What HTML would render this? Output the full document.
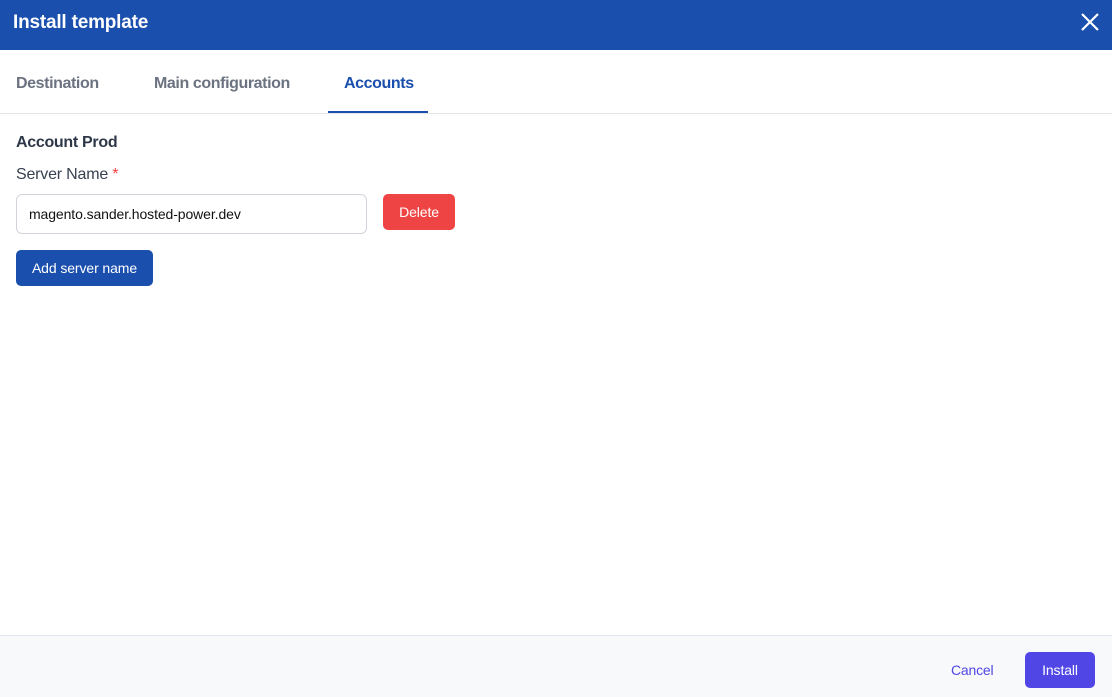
<!DOCTYPE html>
<html><head><meta charset="utf-8"><style>
*{box-sizing:border-box;margin:0;padding:0}
body{width:1112px;height:697px;overflow:hidden;background:#fff;font-family:"Liberation Sans",sans-serif;position:relative}
.hdr{position:absolute;left:0;top:0;width:1112px;height:50px;background:#1a4fad;color:#fff}
.hdr h1{position:absolute;left:13px;top:12px;font-size:19px;font-weight:bold;letter-spacing:-0.2px}
.x{position:absolute;right:13px;top:13px}
.tabs{position:absolute;top:50px;left:0;width:1112px;height:64px;border-bottom:1px solid #e3e5e8}
.tab{position:absolute;top:25px;font-size:16px;font-weight:bold;color:#6b7280;letter-spacing:-0.4px}
.act{color:#1a4fad}
.ul{position:absolute;left:328px;top:61px;width:100px;height:2px;background:#1a4fad}
.t{position:absolute;font-size:16px;color:#374151}
.inp{position:absolute;left:16px;top:194px;width:351px;height:40px;border:1px solid #d1d5db;border-radius:6px;font-size:14px;color:#111;padding:11px 0 0 12px;letter-spacing:-0.1px}
.btn{position:absolute;color:#fff;font-size:14px;border-radius:5px;text-align:center;letter-spacing:-0.1px}
.ft{position:absolute;left:0;top:635px;width:1112px;height:62px;background:#f8f9fb;border-top:1px solid #e3e5ee}
</style></head><body>
<div class="hdr"><h1>Install template</h1>
<svg class="x" width="18" height="18" viewBox="0 0 18 18"><path d="M1 1L17 17M17 1L1 17" stroke="#fff" stroke-width="2.2"/></svg></div>
<div class="tabs">
<div class="tab" style="left:16px">Destination</div>
<div class="tab" style="left:154px">Main configuration</div>
<div class="tab act" style="left:344px">Accounts</div>
<div class="ul"></div></div>
<div class="t" style="left:16px;top:134px;font-weight:bold;color:#2d3748;letter-spacing:-0.3px">Account Prod</div>
<div class="t" style="left:16px;top:166px;letter-spacing:-0.2px">Server Name <span style="color:#ef4444">*</span></div>
<div class="inp">magento.sander.hosted-power.dev</div>
<div class="btn" style="left:383px;top:194px;width:72px;height:36px;background:#ef4444;line-height:36px">Delete</div>
<div class="btn" style="left:16px;top:250px;width:137px;height:36px;background:#1a4fad;line-height:36px">Add server name</div>
<div class="ft">
<div style="position:absolute;left:951px;top:26px;font-size:14px;color:#4f46e5;letter-spacing:-0.2px">Cancel</div>
<div class="btn" style="left:1025px;top:16px;width:70px;height:36px;background:#4f46e5;line-height:36px">Install</div>
</div>
</body></html>
